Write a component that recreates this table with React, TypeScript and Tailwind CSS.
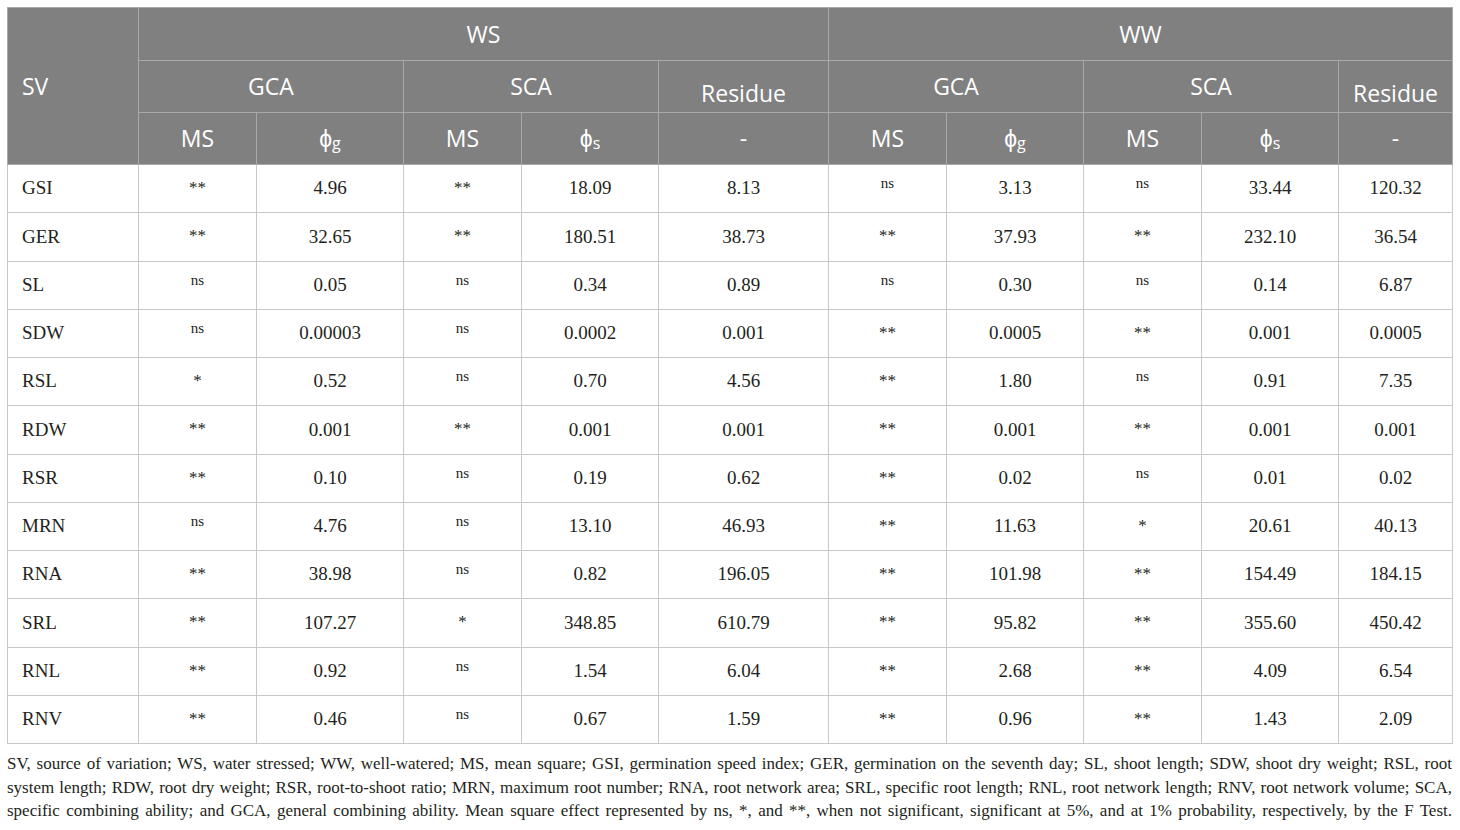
import React from 'react';

type Cell = string;

const rows: Cell[][] = [
  ['GSI', '**', '4.96', '**', '18.09', '8.13', 'ns', '3.13', 'ns', '33.44', '120.32'],
  ['GER', '**', '32.65', '**', '180.51', '38.73', '**', '37.93', '**', '232.10', '36.54'],
  ['SL', 'ns', '0.05', 'ns', '0.34', '0.89', 'ns', '0.30', 'ns', '0.14', '6.87'],
  ['SDW', 'ns', '0.00003', 'ns', '0.0002', '0.001', '**', '0.0005', '**', '0.001', '0.0005'],
  ['RSL', '*', '0.52', 'ns', '0.70', '4.56', '**', '1.80', 'ns', '0.91', '7.35'],
  ['RDW', '**', '0.001', '**', '0.001', '0.001', '**', '0.001', '**', '0.001', '0.001'],
  ['RSR', '**', '0.10', 'ns', '0.19', '0.62', '**', '0.02', 'ns', '0.01', '0.02'],
  ['MRN', 'ns', '4.76', 'ns', '13.10', '46.93', '**', '11.63', '*', '20.61', '40.13'],
  ['RNA', '**', '38.98', 'ns', '0.82', '196.05', '**', '101.98', '**', '154.49', '184.15'],
  ['SRL', '**', '107.27', '*', '348.85', '610.79', '**', '95.82', '**', '355.60', '450.42'],
  ['RNL', '**', '0.92', 'ns', '1.54', '6.04', '**', '2.68', '**', '4.09', '6.54'],
  ['RNV', '**', '0.46', 'ns', '0.67', '1.59', '**', '0.96', '**', '1.43', '2.09'],
];

const widths = [131, 118, 147, 118, 137, 170, 118, 137, 118, 137, 114];
const markCols = [1, 3, 6, 8];

const hd = 'border border-[#a9a9a9] text-white font-normal text-[23px]';

function Phi({ sub }: { sub: string }) {
  return (
    <span>
      ϕ<sub className="text-[16px] relative top-[2px]">{sub}</sub>
    </span>
  );
}

function Mark({ v }: { v: string }) {
  if (v === 'ns') {
    return <span className="relative top-[-5px] text-[15px]">ns</span>;
  }
  return <span className="text-[17px]">{v}</span>;
}

export default function App() {
  return (
    <div className="bg-white w-[1460px] h-[830px] pt-[7px] px-[7px]">
      <table
        className="border-collapse table-fixed w-[1445px]"
        style={{ fontFamily: '"Noto Sans", "Open Sans", sans-serif' }}
      >
        <colgroup>
          {widths.map((w, i) => (
            <col key={i} style={{ width: w }} />
          ))}
        </colgroup>
        <thead className="bg-[#808080]" style={{ fontFamily: '"Open Sans", sans-serif' }}>
          <tr className="h-[53px]">
            <th rowSpan={3} className={`${hd} text-left align-middle pl-[14px]`}>SV</th>
            <th colSpan={5} className={`${hd} align-middle`}>WS</th>
            <th colSpan={5} className={`${hd} align-middle`}>WW</th>
          </tr>
          <tr className="h-[52px]">
            <th colSpan={2} className={hd}>GCA</th>
            <th colSpan={2} className={hd}>SCA</th>
            <th className={`${hd} pt-[14px]`}>Residue</th>
            <th colSpan={2} className={hd}>GCA</th>
            <th colSpan={2} className={hd}>SCA</th>
            <th className={`${hd} pt-[14px]`}>Residue</th>
          </tr>
          <tr className="h-[52px]">
            <th className={hd}>MS</th>
            <th className={hd}><Phi sub="g" /></th>
            <th className={hd}>MS</th>
            <th className={hd}><Phi sub="s" /></th>
            <th className={hd}>-</th>
            <th className={hd}>MS</th>
            <th className={hd}><Phi sub="g" /></th>
            <th className={hd}>MS</th>
            <th className={hd}><Phi sub="s" /></th>
            <th className={hd}>-</th>
          </tr>
        </thead>
        <tbody style={{ fontFamily: '"Liberation Serif", serif' }}>
          {rows.map((r) => (
            <tr key={r[0]} className="h-[48.25px]">
              {r.map((c, i) =>
                markCols.includes(i) ? (
                  <td
                    key={i}
                    className="border border-[#c8c8c8] text-[#231f20] text-[18px] text-center align-top pt-[9px]"
                  >
                    <Mark v={c} />
                  </td>
                ) : (
                  <td
                    key={i}
                    className={`border border-[#c8c8c8] text-[#231f20] text-[19px] align-middle ${
                      i === 0 ? 'text-left pl-[14px]' : 'text-center'
                    }`}
                  >
                    {c}
                  </td>
                )
              )}
            </tr>
          ))}
        </tbody>
      </table>
      <div
        className="w-[1445px] mt-[8px] text-[17px] leading-[23.5px] text-[#231f20] text-justify [text-align-last:justify]"
        style={{ fontFamily: '"Liberation Serif", serif' }}
      >
        <div>
          SV, source of variation; WS, water stressed; WW, well-watered; MS, mean square; GSI, germination speed index; GER, germination on the seventh day; SL, shoot length; SDW, shoot dry weight; RSL, root
        </div>
        <div>
          system length; RDW, root dry weight; RSR, root-to-shoot ratio; MRN, maximum root number; RNA, root network area; SRL, specific root length; RNL, root network length; RNV, root network volume; SCA,
        </div>
        <div>
          specific combining ability; and GCA, general combining ability. Mean square effect represented by ns, *, and **, when not significant, significant at 5%, and at 1% probability, respectively, by the F Test.
        </div>
      </div>
    </div>
  );
}
